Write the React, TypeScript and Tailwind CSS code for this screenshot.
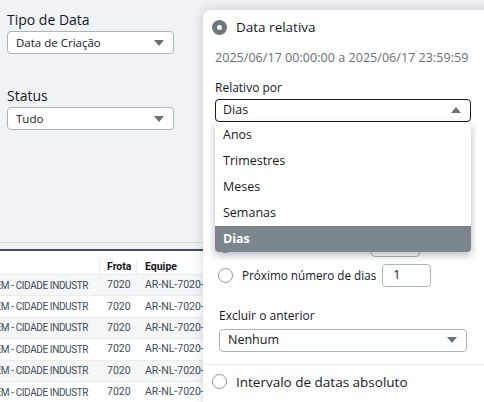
const font = { fontFamily: '"Open Sans", "Noto Sans", sans-serif' };
const tableFont = { fontFamily: 'Roboto, "Noto Sans", sans-serif' };

const options = ["Anos", "Trimestres", "Meses", "Semanas", "Dias"];

const rows = Array.from({ length: 6 }, () => ({
  local: "MONTAGEM - CIDADE INDUSTR",
  frota: "7020",
  equipe: "AR-NL-7020-GRU",
}));

function Caret({ up = false }: { up?: boolean }) {
  return (
    <svg width="10" height="6" viewBox="0 0 10 6" className="shrink-0">
      {up ? <path d="M0 6 L5 0 L10 6 Z" fill="#687078" /> : <path d="M0 0 L10 0 L5 6 Z" fill="#687078" />}
    </svg>
  );
}

function Select({ value, className = "" }: { value: string; className?: string }) {
  return (
    <div
      className={`flex h-[23px] items-center justify-between rounded-[4px] border border-[#aab7b8] bg-white pl-[8px] pr-[9px] text-[11.5px] text-[#16191f] ${className}`}
    >
      <span>{value}</span>
      <Caret />
    </div>
  );
}

function Radio({ checked = false }: { checked?: boolean }) {
  return checked ? (
    <span className="flex h-[15px] w-[15px] shrink-0 items-center justify-center rounded-full bg-[#6d787e]">
      <span className="h-[5px] w-[5px] rounded-full bg-white" />
    </span>
  ) : (
    <span className="h-[15px] w-[15px] shrink-0 rounded-full border-[1.5px] border-[#879596] bg-white" />
  );
}

export default function App() {
  return (
    <div style={font} className="relative h-[402px] w-[484px] overflow-hidden bg-[#f0f2f5] text-[#16191f]">
      {/* filtros à esquerda */}
      <div className="flex w-[174px] flex-col pl-[7px] pt-[11px]">
        <label className="text-[14px] leading-[18px]">Tipo de Data</label>
        <Select value="Data de Criação" className="mt-[2px]" />
        <label className="mt-[33px] text-[14px] leading-[18px]">Status</label>
        <Select value="Tudo" className="mt-[2px]" />
      </div>

      {/* tabela */}
      <div className="mt-[112px] border-t border-[#d5dbdb]">
        <div className="h-[6px]" />
        <div style={tableFont} className="border-t-2 border-[#414d5c] bg-white text-[10.5px]">
          <div className="flex h-[23px] items-center pt-[8px] font-bold">
            <div className="h-full w-[100px] border-r border-[#eaeded]" />
            <div className="flex h-full w-[37px] items-center border-r border-[#eaeded] pl-[7px]">Frota</div>
            <div className="pl-[8px]">Equipe</div>
          </div>
          {rows.map((r, i) => (
            <div
              key={i}
              className={`flex h-[21.4px] items-center whitespace-nowrap border-t border-[#eaeded] text-[#414d5c] ${
                i % 2 === 0 ? "bg-[#f5f6f7]" : "bg-white"
              }`}
            >
              <div className="flex w-[100px] justify-end overflow-hidden pr-[12px] text-[10px] tracking-[-0.4px]">
                <span className="shrink-0">{r.local}</span>
              </div>
              <div className="w-[37px] pl-[7px]">{r.frota}</div>
              <div className="pl-[8px]">{r.equipe}</div>
            </div>
          ))}
        </div>
      </div>

      {/* popover de datas */}
      <div className="absolute left-[203px] top-[10px] h-[400px] w-[290px] rounded-tl-[8px] bg-white shadow-[0_0_12px_rgba(0,28,36,0.18)]">
        <div className="flex h-[34px] items-center gap-[9px] pl-[9px] text-[13.5px]">
          <Radio checked />
          <span>Data relativa</span>
        </div>
        <div className="pl-[12px]">
          <div className="mt-[5px] text-[12.6px] text-[#687078]">2025/06/17 00:00:00 a 2025/06/17 23:59:59</div>
          <div className="mt-[11px] text-[12px]">Relativo por</div>
          <div className="relative mt-[2px] w-[256px]">
            <div className="flex h-[23px] items-center justify-between rounded-[4px] border border-[#16191f] pl-[7px] pr-[9px] text-[12.5px]">
              <span>Dias</span>
              <Caret up />
            </div>
            <ul className="absolute left-0 top-[23px] z-10 w-[256px] overflow-hidden rounded-b-[4px] bg-white text-[12.5px] shadow-[0_3px_8px_rgba(0,28,36,0.3)]">
              {options.map((o) => (
                <li
                  key={o}
                  className={`flex h-[26px] items-center pl-[8px] ${
                    o === "Dias" ? "bg-[#7a868c] font-bold text-white" : "text-[#16191f]"
                  }`}
                >
                  {o}
                </li>
              ))}
            </ul>
          </div>

          <div className="mt-[112px] flex items-center pl-[3px] text-[11.7px]">
            <Radio />
            <span className="ml-[9px]">Último número de dias</span>
            <div className="ml-[4px] flex h-[23px] w-[49px] items-center rounded-[4px] border border-[#aab7b8] pl-[10px] text-[12.5px]">1</div>
          </div>
          <div className="mt-[7px] flex items-center pl-[3px] text-[11.7px]">
            <Radio />
            <span className="ml-[9px]">Próximo número de dias</span>
            <div className="ml-[6px] flex h-[23px] w-[49px] items-center rounded-[4px] border border-[#aab7b8] pl-[10px] text-[12.5px]">1</div>
          </div>

          <div className="mt-[20px] pl-[4px] text-[12px]">Excluir o anterior</div>
          <Select value="Nenhum" className="ml-[4px] mt-[4px] w-[248px] text-[12.5px]" />
        </div>
        <div className="mt-[12px] border-t border-[#eaeded]" />
        <div className="flex h-[34px] items-center gap-[9px] pl-[9px] text-[13.5px]">
          <Radio />
          <span>Intervalo de datas absoluto</span>
        </div>
      </div>
    </div>
  );
}
